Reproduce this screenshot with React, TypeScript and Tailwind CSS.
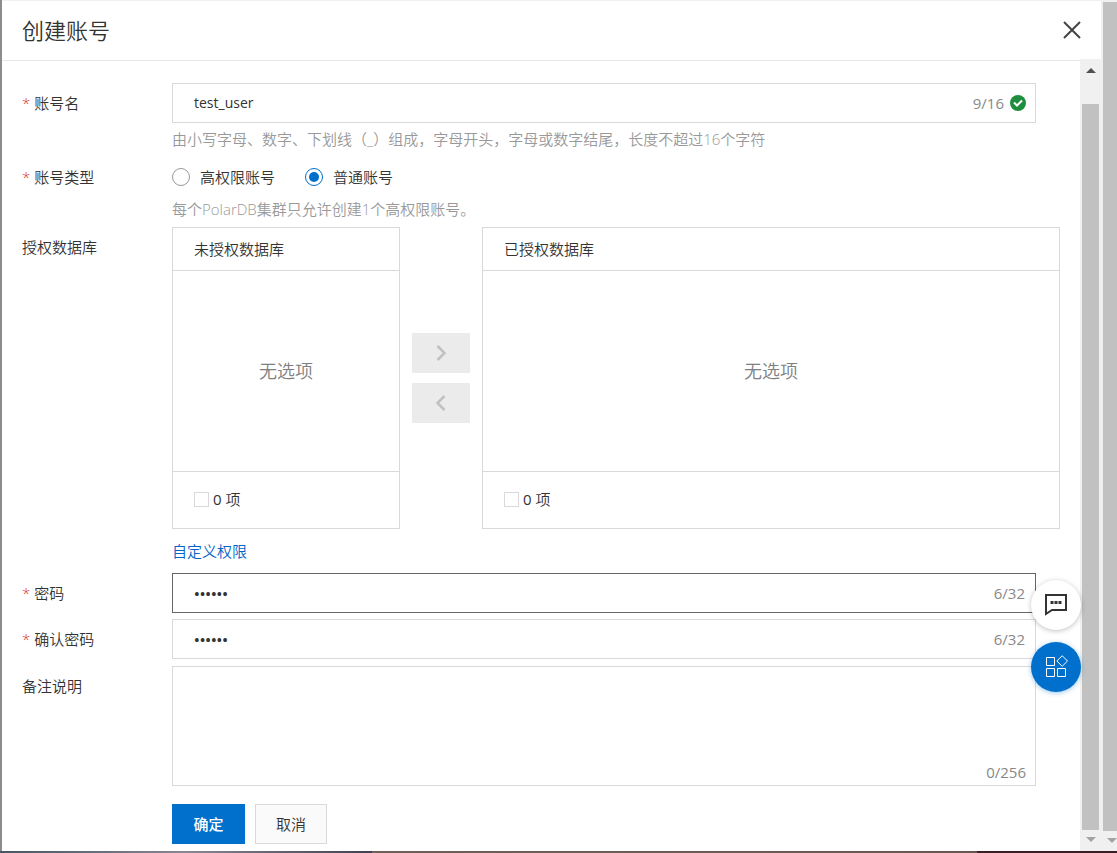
import { useState, type ReactNode } from "react";

type FieldProps = {
  label: string;
  htmlFor?: string;
  required?: boolean;
  children: ReactNode;
};

function Field({ label, htmlFor, required, children }: FieldProps) {
  return (
    <div className="flex items-start">
      <label
        htmlFor={htmlFor}
        className="flex h-10 w-[150px] shrink-0 items-center gap-1"
      >
        {required && <span className="text-[#d93026]">*</span>}
        {label}
      </label>
      <div className="min-w-0 flex-1">{children}</div>
    </div>
  );
}

function PasswordInput({ id, active }: { id: string; active?: boolean }) {
  const [value, setValue] = useState("123456");
  return (
    <div
      className={
        active
          ? "mr-6 flex h-10 items-center border border-[#666] pr-2.5 pl-[21px]"
          : "mr-6 flex h-10 items-center border border-[#d9d9d9] pr-2.5 pl-[21px]"
      }
    >
      <input
        id={id}
        type="password"
        maxLength={32}
        value={value}
        onChange={(e) => setValue(e.target.value)}
        className="min-w-0 flex-1 font-semibold outline-none"
      />
      <span className="font-normal text-[#888]">{value.length}/32</span>
    </div>
  );
}

function TransferPanel({ id, title }: { id: string; title: string }) {
  return (
    <section className="border border-[#d9d9d9]">
      <h2 className="h-[43px] border-b border-[#d9d9d9] px-[21px] leading-[43px]">
        {title}
      </h2>
      <div className="flex h-[200px] items-center justify-center text-lg text-[#808080]">
        无选项
      </div>
      <div className="flex h-[57px] items-center gap-1 border-t border-[#d9d9d9] px-[21px] pb-0.5">
        <input
          id={id}
          type="checkbox"
          className="size-[15px] appearance-none border border-[#d9d9d9] checked:bg-[#0070cc]"
        />
        <label htmlFor={id}>
          <span className="font-normal">0</span> 项
        </label>
      </div>
    </section>
  );
}

function Arrow({ up, dark }: { up?: boolean; dark?: boolean }) {
  return (
    <svg
      viewBox="0 0 10 5"
      className={
        dark
          ? "h-[5px] w-2.5 fill-[#505050]"
          : "h-[5px] w-2.5 fill-[#a3a3a3]"
      }
    >
      <path d={up ? "M0 5 5 0l5 5z" : "M0 0h10L5 5z"} />
    </svg>
  );
}

function MoveButton({ label, path }: { label: string; path: string }) {
  return (
    <button
      type="button"
      disabled
      aria-label={label}
      className="flex h-10 items-center justify-center bg-[#ebebeb]"
    >
      <svg
        viewBox="0 0 10 16"
        className="h-4 w-2.5 fill-none stroke-[#c1c1c1] stroke-[2.5]"
      >
        <path d={path} />
      </svg>
    </button>
  );
}

function Radio({
  id,
  label,
  checked,
  onSelect,
}: {
  id: string;
  label: string;
  checked: boolean;
  onSelect: () => void;
}) {
  return (
    <label htmlFor={id} className="flex items-center gap-2.5">
      <input
        id={id}
        type="radio"
        name="account-type"
        checked={checked}
        onChange={onSelect}
        className="size-[18px] appearance-none rounded-full border border-[#999] checked:border-[#0070cc] checked:bg-[#0070cc] checked:bg-clip-content checked:p-[3px]"
      />
      {label}
    </label>
  );
}

export default function App() {
  const [name, setName] = useState("test_user");
  const [type, setType] = useState("normal");
  const [remark, setRemark] = useState("");

  return (
    <div className="flex min-h-screen flex-col bg-white font-['Open_Sans','Noto_Sans_CJK_SC',sans-serif] text-[15px] font-[350] text-[#333]">
      <div className="flex flex-1">
        <div className="w-0.5 bg-[#8c8c8c]" />
        <main className="flex min-w-0 flex-1 flex-col">
          <header className="flex h-[59px] items-center justify-between border-t border-[#f0f0f0] pr-5 pl-5">
            <h1 className="text-[22px]">创建账号</h1>
            <button type="button" aria-label="关闭">
              <svg
                viewBox="0 0 18 18"
                className="size-[18px] fill-none stroke-[#444] stroke-2"
              >
                <path d="M1 1l16 16M17 1L1 17" />
              </svg>
            </button>
          </header>
          <div className="flex flex-1">
            <form className="mt-px min-w-0 flex-1 border-t border-[#e8e8e8] pt-[22px] pr-5 pb-[7px] pl-5">
              <Field label="账号名" htmlFor="name" required>
                <div className="mr-6 flex h-10 items-center border border-[#d9d9d9] pr-[9px] pl-[21px]">
                  <input
                    id="name"
                    maxLength={16}
                    value={name}
                    onChange={(e) => setName(e.target.value)}
                    className="min-w-0 flex-1 text-sm font-normal outline-none"
                  />
                  <span className="mr-1.5 font-normal text-[#888]">
                    {name.length}/16
                  </span>
                  <svg viewBox="0 0 16 16" className="size-4 fill-none">
                    <circle cx="8" cy="8" r="8" fill="#1e8e3e" />
                    <path d="M4 7.500l3 3 5-5" stroke="#fff" strokeWidth="2" />
                  </svg>
                </div>
                <p className="mb-0.5 leading-8 text-[#999]">
                  由小写字母、数字、下划线（_）组成，字母开头，字母或数字结尾，长度不超过16个字符
                </p>
              </Field>
              <Field label="账号类型" required>
                <div className="flex h-10 items-center gap-[30px]">
                  <Radio
                    id="super"
                    label="高权限账号"
                    checked={type === "super"}
                    onSelect={() => setType("super")}
                  />
                  <Radio
                    id="normal"
                    label="普通账号"
                    checked={type === "normal"}
                    onSelect={() => setType("normal")}
                  />
                </div>
                <p className="mb-1.5 leading-6 text-[#999]">
                  每个PolarDB集群只允许创建1个高权限账号。
                </p>
              </Field>
              <Field label="授权数据库">
                <div className="grid grid-cols-[228px_58px_1fr] items-center gap-3">
                  <TransferPanel id="left-all" title="未授权数据库" />
                  <div className="flex flex-col gap-2.5">
                    <MoveButton label="授权" path="M1.500 1l7 7-7 7" />
                    <MoveButton label="取消授权" path="M8.500 1l-7 7 7 7" />
                  </div>
                  <TransferPanel id="right-all" title="已授权数据库" />
                </div>
                <a href="#" className="block h-11 leading-[44px] text-[#0064c8]">
                  自定义权限
                </a>
              </Field>
              <Field label="密码" htmlFor="password" required>
                <PasswordInput id="password" active />
              </Field>
              <div className="mt-1.5 mb-[7px]">
                <Field label="确认密码" htmlFor="confirm" required>
                  <PasswordInput id="confirm" />
                </Field>
              </div>
              <Field label="备注说明" htmlFor="remark">
                <div className="mr-6 flex h-[120px] flex-col border border-[#d9d9d9] pr-[9px] pb-0.5 pl-[21px]">
                  <textarea
                    id="remark"
                    maxLength={256}
                    value={remark}
                    onChange={(e) => setRemark(e.target.value)}
                    className="w-full flex-1 resize-none outline-none"
                  />
                  <span className="self-end font-normal text-[#888]">
                    {remark.length}/256
                  </span>
                </div>
                <div className="mt-[18px] flex gap-2.5">
                  <button
                    type="submit"
                    className="h-10 w-[73px] bg-[#0070cc] font-medium text-white"
                  >
                    确定
                  </button>
                  <button
                    type="button"
                    className="h-10 w-[72px] border border-[#d9d9d9] bg-[#fafafa]"
                  >
                    取消
                  </button>
                </div>
              </Field>
            </form>
            <div className="flex w-[21px] flex-col items-center bg-[#f0f0f0] pt-[9px] pb-[9px]">
              <Arrow up dark />
              <div className="mt-[31px] mb-[7px] w-[17px] flex-1 bg-[#c1c1c1]" />
              <Arrow />
            </div>
          </div>
        </main>
        <div className="flex w-4 flex-col items-end bg-[#f0f0f0] pt-0.5 pb-2">
          <div className="mb-[7px] w-3.5 flex-1 bg-[#c1c1c1]" />
          <Arrow />
        </div>
      </div>
      <div className="flex h-0.5">
        <div className="w-1/3 bg-linear-to-r from-[#465664] via-[#8a8794] to-[#3e4250]" />
        <div className="flex-1 bg-linear-to-r from-[#70605a] to-[#6a5650]" />
        <div className="w-1/8 bg-[#3a2024]" />
      </div>

      <div className="absolute right-9 bottom-[161px] flex flex-col gap-3">
        <button
          type="button"
          aria-label="反馈"
          className="flex size-[50px] items-center justify-center rounded-full bg-white shadow-[0_1px_5px_rgba(0,0,0,0.25)]"
        >
          <svg
            viewBox="0 0 24 24"
            className="size-6 fill-none stroke-[#333] stroke-2"
          >
            <path d="M2 2h20v15H8l-6 4z" />
            <path d="M6.500 9.500h3M10.500 9.500h3M14.500 9.500h3" strokeWidth="3" />
          </svg>
        </button>
        <button
          type="button"
          aria-label="应用"
          className="flex size-[50px] items-center justify-center rounded-full bg-[#0070cc] shadow-[0_1px_5px_rgba(0,112,204,0.4)]"
        >
          <svg viewBox="0 0 24 24" className="size-6 fill-none stroke-white">
            <path d="M2.500 2.500h8v8h-8zM2.500 13.500h8v8h-8zM13.500 13.500h8v8h-8zM18.200 0.700l5.300 5.300-5.300 5.300-5.300-5.300z" />
          </svg>
        </button>
      </div>
    </div>
  );
}
